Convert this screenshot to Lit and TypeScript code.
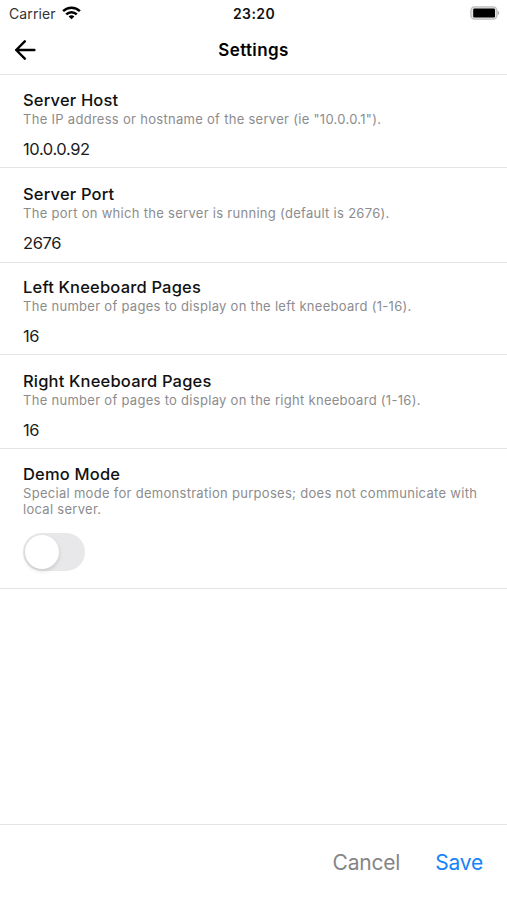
import { LitElement, html, css, svg } from "lit";
import { customElement, property } from "lit/decorators.js";

@customElement("setting-row")
class SettingRow extends LitElement {
  @property() label = "";
  @property() hint = "";
  @property() value = "";

  static styles = css`
    :host { display: block; box-sizing: border-box; padding: 15px 23px 0; border-bottom: 1px solid #e4e4e6; }
    .label { font-size: 16.5px; line-height: 20px; font-weight: 500; letter-spacing: 0.18px; color: #111; white-space: nowrap; }
    .hint { font-size: 13px; line-height: 16px; letter-spacing: 0.29px; color: #8c8c8e; margin-top: 1px; }
    .value { font-size: 16.5px; line-height: 20px; letter-spacing: -0.4px; color: #1c1c1c; margin-top: 12px; }
  `;

  render() {
    return html`
      <div class="label">${this.label}</div>
      <div class="hint">${this.hint}</div>
      ${this.value ? html`<div class="value">${this.value}</div>` : html`<slot></slot>`}
    `;
  }
}

@customElement("app-root")
class AppRoot extends LitElement {
  static styles = css`
    :host { display: flex; flex-direction: column; height: 900px; width: 507px; box-sizing: border-box; overflow: hidden; background: #fff; color: #000; font-family: Inter, "Liberation Sans", sans-serif; }
    svg { display: block; }
    .status { display: grid; grid-template-columns: 1fr auto 1fr; align-items: center; height: 27px; padding: 0 7px 0 9px; flex: none; }
    .carrier { display: flex; align-items: center; gap: 6px; font-size: 14px; letter-spacing: 0.1px; color: #333; }
    .wifi { margin-top: -1px; }
    .time { font-size: 14px; font-weight: 600; letter-spacing: 0.4px; color: #111; margin-left: -1px; }
    .battery { justify-self: end; margin-top: -1px; }
    .header { display: grid; grid-template-columns: 1fr auto 1fr; align-items: center; height: 47px; padding: 0 14px 0 14px; border-bottom: 1px solid #e4e4e6; flex: none; }
    .back { margin-top: -2px; }
    .title { font-size: 17px; font-weight: 600; line-height: 22px; letter-spacing: 0.38px; margin-top: -1px; }
    .r1 { height: 93px; }
    .r2 { height: 95px; padding-top: 15.5px; }
    .r3 { height: 92px; padding-top: 14px; }
    .r4 { height: 94px; padding-top: 16px; }
    .r5 { height: 140px; }
    .switch { width: 62px; height: 38px; margin-top: 16px; border-radius: 19px; background: #e8e8ea; box-sizing: border-box; padding: 2px; }
    .knob { width: 34px; height: 34px; border-radius: 50%; background: #fff; box-shadow: 0 2px 4px rgba(0, 0, 0, 0.14); }
    .footer { margin-top: auto; height: 76px; box-sizing: border-box; border-top: 1px solid #e4e4e6; display: flex; justify-content: flex-end; gap: 35px; padding: 24px 24px 0 0; font-size: 21px; line-height: 28px; letter-spacing: -0.2px; flex: none; }
    .cancel { color: #858587; }
    .save { color: #1683f8; }
  `;

  render() {
    return html`
      <div class="status">
        <div class="carrier">
          <span class="name">Carrier</span>
          <svg class="wifi" width="19" height="14" viewBox="0 0 19 14">
            ${svg`<g fill="none" stroke="#000" stroke-width="2.5">
              <path d="M1.1 5.1C5.8 0.5 13.2 0.5 17.9 5.1"/>
              <path d="M4.2 8.3C7.2 5.4 11.8 5.4 14.8 8.3"/></g>
              <path d="M9.5 13.2L6.6 10.4C8.2 9 10.8 9 12.4 10.4Z"/>`}
          </svg>
        </div>
        <div class="time">23:20</div>
        <svg class="battery" width="30" height="14" viewBox="0 0 30 14">
          <rect x="0.9" y="0.9" width="26" height="12.2" rx="3.6" fill="#e4e4e4" stroke="#bdbdbd" stroke-width="1.3"/>
          <rect x="3.2" y="2.6" width="21.8" height="8.8" rx="1.2" fill="#000"/>
          <path d="M27.6 4.8C29.9 5.5 29.9 8.5 27.6 9.2Z" fill="#b5b5b5"/>
        </svg>
      </div>
      <div class="header">
        <svg class="back" width="22" height="20" viewBox="0 0 22 20" fill="none" stroke="#000" stroke-width="2.4" stroke-linecap="round" stroke-linejoin="round">
          <path d="M20.4 10H2.2M10.8 1.3L2.2 10L10.8 18.7"/>
        </svg>
        <div class="title">Settings</div>
      </div>
      <setting-row class="r1" label="Server Host" hint='The IP address or hostname of the server (ie "10.0.0.1").' value="10.0.0.92"></setting-row>
      <setting-row class="r2" label="Server Port" hint="The port on which the server is running (default is 2676)." value="2676"></setting-row>
      <setting-row class="r3" label="Left Kneeboard Pages" hint="The number of pages to display on the left kneeboard (1-16)." value="16"></setting-row>
      <setting-row class="r4" label="Right Kneeboard Pages" hint="The number of pages to display on the right kneeboard (1-16)." value="16"></setting-row>
      <setting-row class="r5" label="Demo Mode" hint="Special mode for demonstration purposes; does not communicate with local server.">
        <div class="switch"><div class="knob"></div></div>
      </setting-row>
      <div class="footer"><span class="cancel">Cancel</span><span class="save">Save</span></div>
    `;
  }
}
